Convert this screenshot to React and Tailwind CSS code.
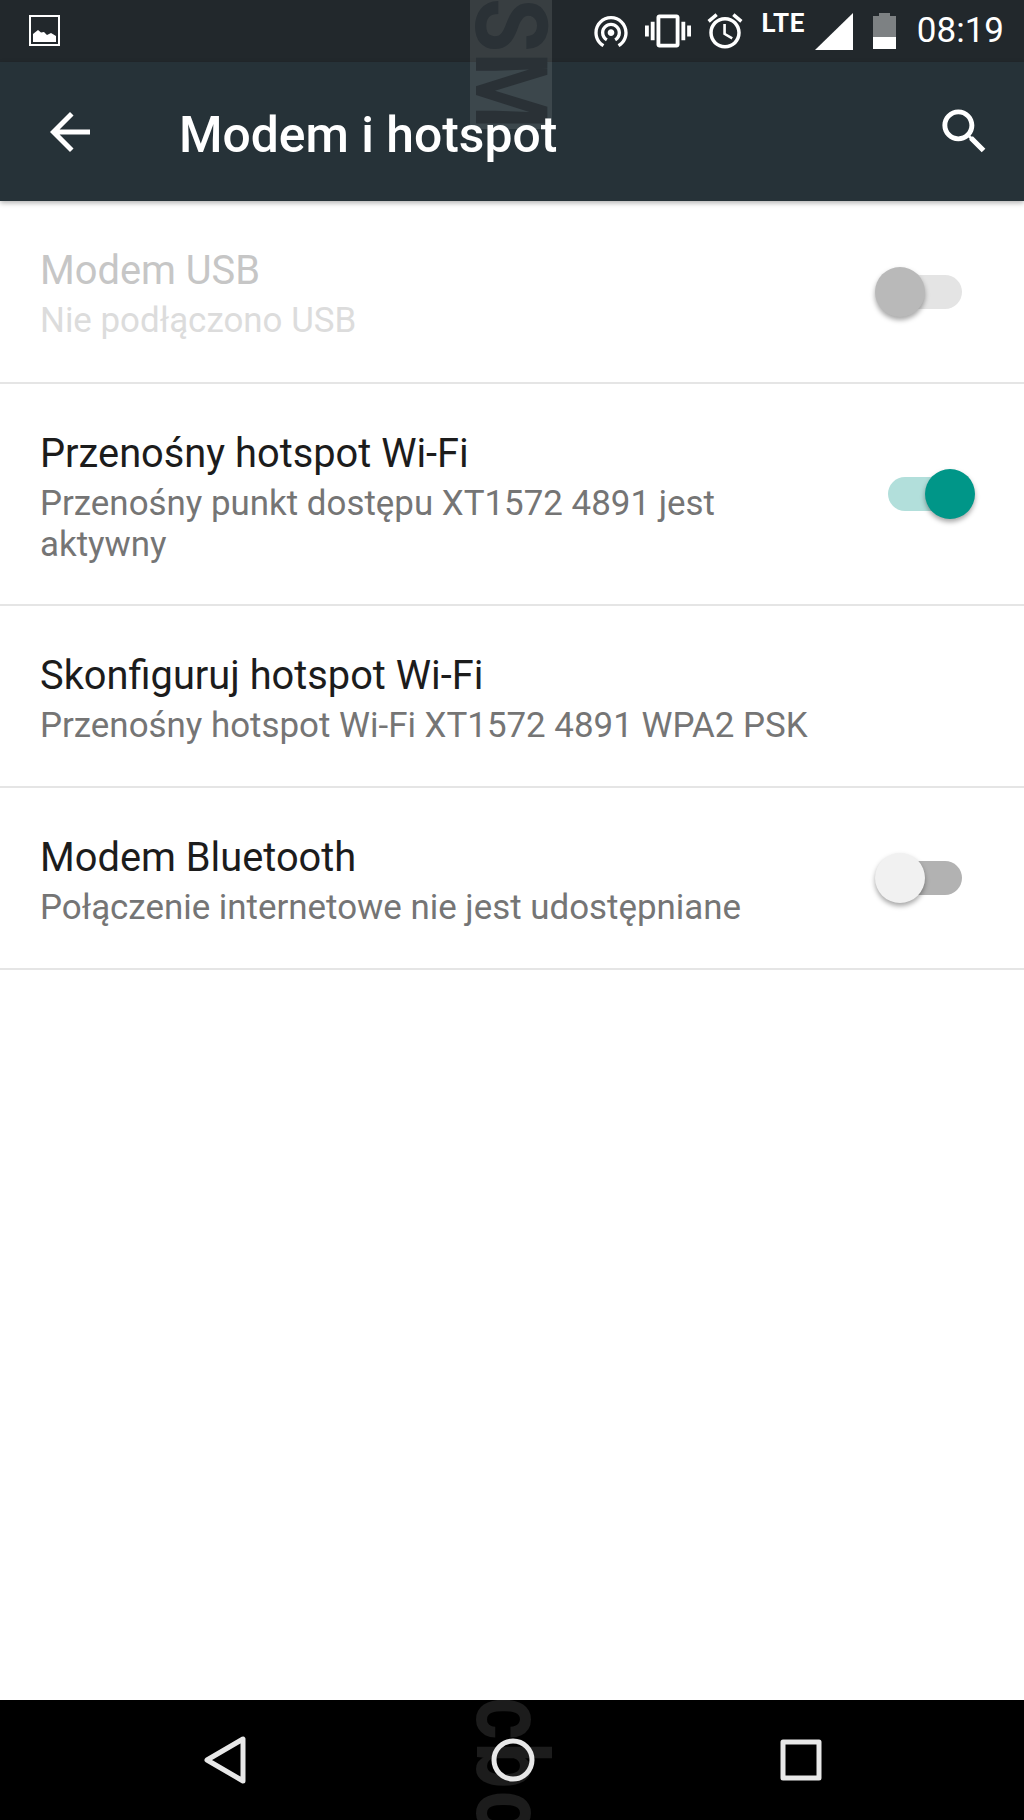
function Przelacznik({ stan }) {
  // trzy stany: wyłączony (szary), włączony (zielony), nieaktywny
  const tor = stan === 'wl' ? 'bg-[#b2dfdb]' : stan === 'wyl' ? 'bg-[#b2b2b2]' : 'bg-[#e4e4e4]';
  const galka =
    stan === 'wl'
      ? 'right-[-13px] bg-[#009688]'
      : stan === 'wyl'
        ? 'left-[-13px] bg-[#f1f1f1]'
        : 'left-[-13px] bg-[#b9b9b9]';
  return (
    <div className={`relative w-[74px] h-[34px] rounded-full ${tor}`}>
      <div className={`absolute top-[-8px] w-[50px] h-[50px] rounded-full shadow-[0_3px_5px_rgba(0,0,0,0.35)] ${galka}`}></div>
    </div>
  );
}

function Wiersz({ tytul, opis, przelacznik, nieaktywny, wysokosc }) {
  return (
    <div className={`flex items-center border-b-2 border-[#e5e5e5] pl-[40px] pr-[62px] ${wysokosc}`}>
      <div className={`flex-1 self-start pt-[47px] ${przelacznik ? 'pr-[60px]' : ''}`}>
        <div className={`text-[39.8px] leading-[46px] ${nieaktywny ? 'text-[#c6c6c6]' : 'text-[#1c1c1c]'}`}>{tytul}</div>
        <div className={`text-[34.9px] leading-[41px] mt-[6px] ${nieaktywny ? 'text-[#dcdcdc]' : 'text-[#757575]'}`}>{opis}</div>
      </div>
      {przelacznik && <Przelacznik stan={przelacznik} />}
    </div>
  );
}

export default function App() {
  return (
    <div className="relative w-[1024px] h-[1820px] flex flex-col bg-white overflow-hidden font-['Roboto',sans-serif]">
      {/* Pasek stanu */}
      <div className="h-[62px] shrink-0 bg-[#22282c] flex items-center text-white pl-[29px] pr-[20px]">
        <svg width="31" height="31" viewBox="0 0 31 31" className="mb-[1px]">
          <rect x="1" y="1" width="29" height="29" fill="none" stroke="#fff" strokeWidth="2" />
          <path d="M4 27v-8l5-4 3 2.500 3-.5 3 3 4-2 5 3v6z" fill="#fff" />
        </svg>
        <div className="flex-1"></div>
        <svg width="40" height="40" viewBox="0 0 24 24" fill="#fff" className="mr-[14px]">
          <path d="M12 11c-1.100 0-2 .9-2 2s.9 2 2 2 2-.9 2-2-.9-2-2-2zm6 2c0-3.310-2.690-6-6-6s-6 2.690-6 6c0 2.220 1.210 4.150 3 5.190l1-1.740c-1.190-.7-2-1.970-2-3.450 0-2.210 1.790-4 4-4s4 1.790 4 4c0 1.480-.81 2.750-2 3.450l1 1.740c1.790-1.040 3-2.970 3-5.190zM12 3C6.480 3 2 7.480 2 13c0 3.700 2.010 6.920 4.990 8.650l1-1.730C5.610 18.530 4 15.960 4 13c0-4.420 3.580-8 8-8s8 3.580 8 8c0 2.960-1.610 5.530-4 6.920l1 1.730c2.990-1.730 5-4.950 5-8.650 0-5.520-4.480-10-10-10z" />
        </svg>
        <svg width="46" height="44" viewBox="0 0 24 24" fill="#fff" preserveAspectRatio="none" className="mr-[13px]">
          <path d="M0 15h2V9H0v6zm3 2h2V7H3v10zm19-8v6h2V9h-2zm-3 8h2V7h-2v10zM16.500 3h-9C6.670 3 6 3.670 6 4.500v15c0 .83.67 1.500 1.500 1.500h9c.83 0 1.500-.67 1.500-1.500v-15c0-.83-.67-1.500-1.500-1.500zM16 19H8V5h8v14z" />
        </svg>
        <svg width="42" height="42" viewBox="0 0 24 24" fill="#fff" className="mr-[15px] mt-[-1px]">
          <path d="M22 5.720l-4.600-3.860-1.290 1.530 4.600 3.860L22 5.720zM7.880 3.390L6.600 1.860 2 5.710l1.290 1.530 4.590-3.850zM12.500 8H11v6l4.750 2.850.75-1.230-4-2.370V8zM12 4c-4.970 0-9 4.030-9 9s4.020 9 9 9c4.970 0 9-4.030 9-9s-4.030-9-9-9zm0 16c-3.870 0-7-3.130-7-7s3.130-7 7-7 7 3.130 7 7-3.130 7-7 7z" />
        </svg>
        <div className="text-[26px] leading-[24px] font-bold self-start mt-[11px] mr-[10px] tracking-[0.5px]">LTE</div>
        <svg width="38" height="37" viewBox="0 0 38 37" className="mr-[20px]">
          <path d="M0 37L38 0v37z" fill="#fff" />
        </svg>
        <div className="w-[23px] h-[36px] flex flex-col mr-[21px]">
          <div className="mx-auto w-[11px] h-[3px] bg-[#7d8183]"></div>
          <div className="h-[21px] bg-[#7d8183]"></div>
          <div className="h-[12px] bg-white"></div>
        </div>
        <div className="text-[35px] leading-[40px]">08:19</div>
      </div>

      {/* Pasek narzędzi */}
      <div className="relative h-[139px] shrink-0 bg-[#263238] flex items-center text-white shadow-[0_2px_5px_rgba(0,0,0,0.3)]">
        <svg width="60" height="60" viewBox="0 0 24 24" fill="#fff" className="ml-[40px]">
          <path d="M20 11H7.830l5.590-5.590L12 4l-8 8 8 8 1.410-1.410L7.830 13H20v-2z" />
        </svg>
        <div className="relative z-30 ml-[79px] mt-[7px] flex-1 text-[49.800px] leading-[56px] font-medium">Modem i hotspot</div>
        <svg width="59" height="59" viewBox="0 0 24 24" fill="#fff" className="mr-[30px]">
          <path d="M15.500 14h-.79l-.28-.27C15.410 12.590 16 11.110 16 9.500 16 5.910 13.090 3 9.500 3S3 5.910 3 9.500 5.910 16 9.500 16c1.610 0 3.090-.59 4.230-1.570l.27.28v.79l5 4.990L20.490 19l-4.990-5zm-6 0C7.010 14 5 11.990 5 9.500S7.010 5 9.500 5 14 7.010 14 9.500 11.990 14 9.500 14z" />
        </svg>
      </div>

      {/* Lista ustawień */}
      <div className="flex-1">
        <Wiersz
          wysokosc="h-[183px]"
          nieaktywny
          tytul="Modem USB"
          opis="Nie podłączono USB"
          przelacznik="nieakt"
        />
        <Wiersz
          wysokosc="h-[222px]"
          tytul="Przenośny hotspot Wi-Fi"
          opis="Przenośny punkt dostępu XT1572 4891 jest aktywny"
          przelacznik="wl"
        />
        <Wiersz wysokosc="h-[182px]" tytul="Skonfiguruj hotspot Wi-Fi" opis="Przenośny hotspot Wi-Fi XT1572 4891 WPA2 PSK" />
        <Wiersz
          wysokosc="h-[182px]"
          tytul="Modem Bluetooth"
          opis="Połączenie internetowe nie jest udostępniane"
          przelacznik="wyl"
        />
      </div>

      {/* Pasek nawigacji */}
      <div className="relative h-[120px] shrink-0 bg-black flex items-center justify-between pl-[202px] pr-[202px]">
        <svg width="46" height="50" viewBox="0 0 46 50" fill="none" stroke="#e8e8e8" strokeWidth="5" strokeLinejoin="round">
          <path d="M41 4v42L5 25z" />
        </svg>
        <svg width="46" height="46" viewBox="0 0 46 46" fill="none" stroke="#e8e8e8" strokeWidth="5" className="relative z-10 mr-[3px]">
          <circle cx="23" cy="23" r="19" />
        </svg>
        <svg width="42" height="42" viewBox="0 0 42 42" fill="none" stroke="#e8e8e8" strokeWidth="5" strokeLinejoin="round">
          <rect x="3" y="3" width="36" height="36" />
        </svg>
      </div>

      {/* Znaki wodne */}
      <div className="absolute left-[470px] top-0 w-[82px] h-[129px] bg-white/10 z-20 overflow-hidden">
        <div className="absolute left-[90px] top-[-2px] origin-top-left rotate-90 scale-x-[0.88] text-[100px] leading-[100px] font-bold text-[#2a3136] whitespace-nowrap">
          SM
        </div>
      </div>
      <div className="absolute left-[470px] top-[1700px] w-[82px] h-[120px] overflow-hidden">
        <div className="absolute left-[91px] top-[-3px] origin-top-left rotate-90 scale-x-[0.82] text-[100px] leading-[100px] tracking-[3px] font-bold text-[#1c1c1c] whitespace-nowrap">
          cbc
        </div>
      </div>
    </div>
  );
}
